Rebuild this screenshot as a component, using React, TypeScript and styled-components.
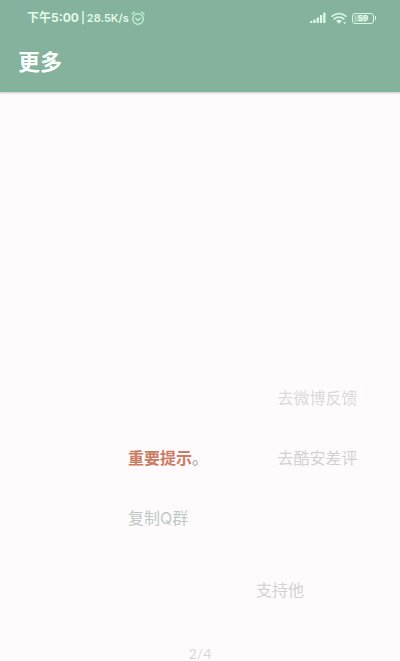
import React from "react";
import styled, { createGlobalStyle } from "styled-components";

const GlobalStyle = createGlobalStyle`
  * { box-sizing: border-box; }
  body {
    margin: 0;
    background: #fffbfd;
    font-family: Roboto, "Noto Sans CJK SC", sans-serif;
  }
`;

const Page = styled.div`
  display: flex;
  flex-direction: column;
  min-height: 100vh;
`;

const Header = styled.header`
  background: #84b29c;
  color: #fafffb;
  box-shadow: 0 1px 2px rgba(60, 80, 70, 0.3);
`;

const StatusBar = styled.div`
  display: flex;
  align-items: center;
  justify-content: space-between;
  height: 36px;
  padding: 0 24px 0 27px;
  color: #e2fbeb;
`;

const StatusGroup = styled.div<{ $gap: number }>`
  display: flex;
  align-items: center;
  gap: ${(p) => p.$gap}px;
  font-family: Inter, "Noto Sans CJK SC", sans-serif;
  font-size: 11px;
  font-weight: 600;
  line-height: 16px;
  white-space: nowrap;
`;

const Clock = styled.span`
  font-size: 12px;
  font-weight: 700;
`;

const Title = styled.h1`
  margin: 0;
  padding: 11px 18px 13px;
  font-size: 22px;
  font-weight: 700;
  line-height: 32px;
`;

const Main = styled.main`
  flex: 1;
  display: flex;
  flex-direction: column;
  justify-content: flex-end;
`;

const Actions = styled.div`
  display: grid;
  grid-template-columns: 55% 1fr;
  grid-auto-rows: 24px;
  row-gap: 36px;
  padding-left: 32%;
  align-items: center;
`;

const tones = {
  faint: "#dcd9da",
  soft: "#d3d1d2",
  green: "#bccac5",
  alert: "#cb7c62",
};

const Action = styled.button<{ $tone: keyof typeof tones; $column?: number; $strong?: boolean }>`
  grid-column: ${(p) => p.$column ?? 1};
  justify-self: start;
  margin: 0;
  padding: 0;
  border: 0;
  background: none;
  color: ${(p) => tones[p.$tone]};
  font-family: Inter, "Noto Sans CJK SC", sans-serif;
  font-size: 16px;
  font-weight: ${(p) => (p.$strong ? 700 : 400)};
  line-height: 24px;
  white-space: nowrap;
  cursor: pointer;
`;

const Stop = styled.span`
  color: #8f9a96;
  font-weight: 400;
`;

const Support = styled.div`
  display: flex;
  padding: 48px 0 45px 64%;
`;

const Counter = styled.p`
  margin: 0;
  color: #d9d7d8;
  font-family: Lato, sans-serif;
  font-size: 14px;
  line-height: 14px;
  text-align: center;
`;

const AlarmIcon = () => (
  <svg width="14" height="15" viewBox="0 0 14 15" fill="none" stroke="#b9efcf" strokeWidth="1.5" strokeLinecap="round" strokeLinejoin="round" aria-hidden="true">
    <circle cx="7" cy="8" r="5.3" />
    <path d="M1 3 3.4 1.2M13 3 10.6 1.2M4.8 7.6 7 9.4 9.2 7.2" />
  </svg>
);

const SignalIcon = () => (
  <svg width="16" height="12" viewBox="0 0 16 12" fill="#dcfbe7" aria-hidden="true">
    <rect x="0" y="9" width="2.3" height="2" rx=".6" />
    <rect x="3.3" y="7.5" width="2.3" height="3.5" rx=".6" />
    <rect x="6.6" y="5.5" width="2.3" height="5.5" rx=".6" />
    <rect x="9.9" y="3" width="2.3" height="8" rx=".6" />
    <rect x="13.2" y="0.5" width="2.3" height="10.5" rx=".6" />
  </svg>
);

const WifiIcon = () => (
  <svg width="16" height="13" viewBox="0 0 16 13" fill="none" stroke="#dcfbe7" strokeWidth="1.6" strokeLinecap="round" aria-hidden="true">
    <path d="M1 4.3C5 .6 11 .6 15 4.3M3.3 6.9c2.7-2.5 6.7-2.5 9.4 0" />
    <path d="M5.2 8.9c1.6-1.5 4-1.5 5.6 0L8 11.7Z" fill="#dcfbe7" stroke="none" />
    <path d="M12.3 10.2h2.8l-1.4 2Z" fill="#dcfbe7" stroke="none" />
  </svg>
);

const BatteryFrame = styled.span`
  position: relative;
  display: flex;
  align-items: center;
  justify-content: center;
  width: 22px;
  height: 11px;
  margin-right: 2px;
  border: 1px solid #d6f8e2;
  border-radius: 3px;
  background: linear-gradient(#a3cdb6, #a3cdb6) 1px 1px / 12px 7px no-repeat;
  color: #edfff3;
  font-size: 8px;
  font-weight: 700;
  line-height: 9px;

  &::after {
    content: "";
    position: absolute;
    right: -3px;
    width: 1px;
    height: 4px;
    background: #d6f8e2;
  }
`;

export default function App() {
  return (
    <Page>
      <GlobalStyle />
      <Header>
        <StatusBar>
          <StatusGroup $gap={2}>
            <Clock>下午5:00</Clock>
            <span>|</span>
            <span>28.5K/s</span>
            <AlarmIcon />
          </StatusGroup>
          <StatusGroup $gap={5}>
            <SignalIcon />
            <WifiIcon />
            <BatteryFrame>59</BatteryFrame>
          </StatusGroup>
        </StatusBar>
        <Title>更多</Title>
      </Header>
      <Main>
        <Actions>
          <Action $tone="faint" $column={2}>去微博反馈</Action>
          <Action $tone="alert" $strong>
            重要提示<Stop>。</Stop>
          </Action>
          <Action $tone="soft" $column={2}>去酷安差评</Action>
          <Action $tone="green">复制Q群</Action>
        </Actions>
        <Support>
          <Action $tone="soft">支持他</Action>
        </Support>
        <Counter>2/4</Counter>
      </Main>
    </Page>
  );
}
